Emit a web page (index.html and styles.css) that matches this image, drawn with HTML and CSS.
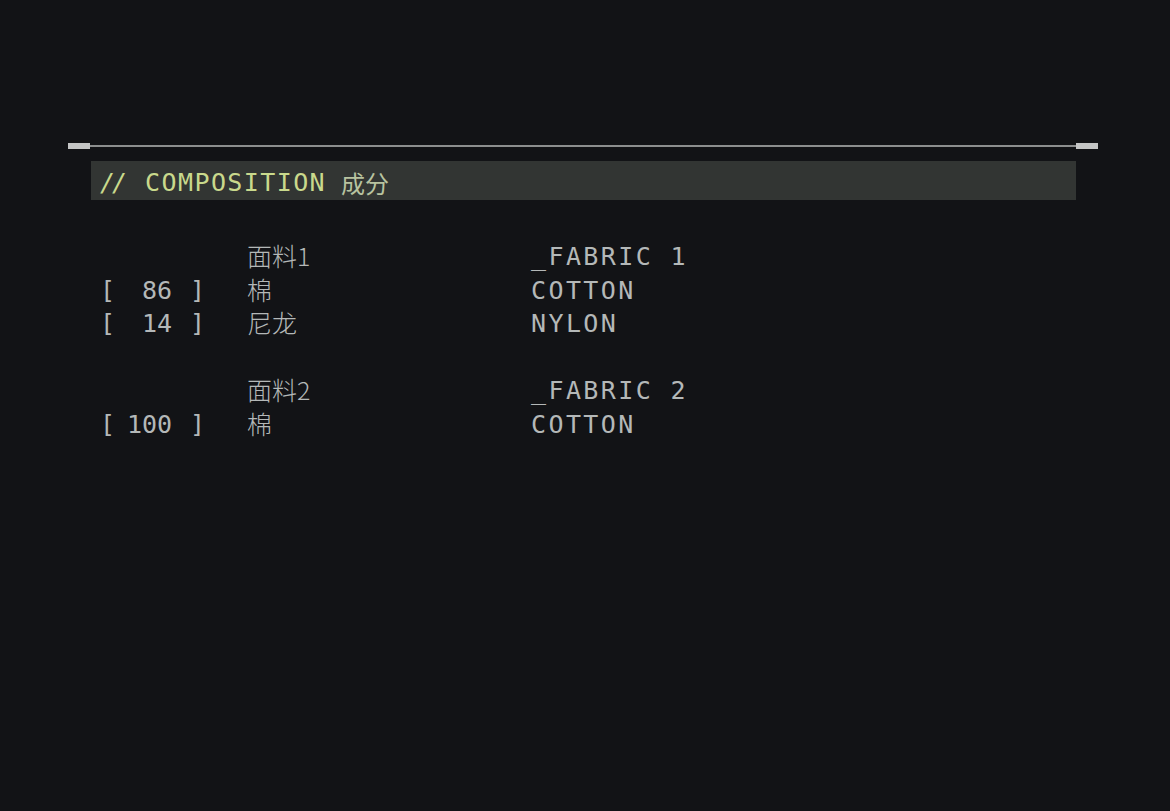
FILE: index.html
```html
<!DOCTYPE html>
<html lang="zh">
<head>
<meta charset="utf-8">
<title>Composition</title>
<link rel="stylesheet" href="styles.css">
</head>
<body>
<div class="panel">
  <div class="rule"><span class="cap"></span><span class="line"></span><span class="cap"></span></div>
  <div class="header"><span class="slashes">//</span><span class="title">COMPOSITION</span><span class="title-cn">成分</span></div>
  <div class="table">
    <div class="pct"></div><div class="cn">面料1</div><div class="en">_FABRIC 1</div>
    <div class="pct"><span>[</span><span class="num">86</span><span class="close">]</span></div><div class="cn">棉</div><div class="en">COTTON</div>
    <div class="pct"><span>[</span><span class="num">14</span><span class="close">]</span></div><div class="cn">尼龙</div><div class="en">NYLON</div>
    <div class="pct"></div><div class="cn"></div><div class="en"></div>
    <div class="pct"></div><div class="cn">面料2</div><div class="en">_FABRIC 2</div>
    <div class="pct"><span>[</span><span class="num">100</span><span class="close">]</span></div><div class="cn">棉</div><div class="en">COTTON</div>
  </div>
</div>
</body>
</html>
```
FILE: styles.css
```css
html, body {
  margin: 0;
  padding: 0;
  background: #121316;
  height: 100%;
}
body {
  font-family: "DejaVu Sans Mono", "Noto Sans CJK SC", monospace;
  color: #b4b8b8;
}
.panel {
  padding: 143px 0 0 68px;
  width: 1030px;
}
.rule {
  display: flex;
  align-items: center;
  height: 6px;
}
.rule .cap {
  width: 22px;
  height: 6px;
  background: #c4c5c5;
}
.rule .line {
  flex: 1;
  height: 2px;
  background: #8c8e8e;
}
.header {
  margin: 12px 0 0 23px;
  padding-top: 4px;
  box-sizing: border-box;
  width: 985px;
  height: 39px;
  background: #323533;
  display: flex;
  align-items: center;
  color: #c9d98c;
  font-size: 25px;
}
.slashes {
  margin-left: 9px;
  letter-spacing: -3px;
  font-style: italic;
}
.title {
  margin-left: 21px;
  letter-spacing: 1.4px;
}
.title-cn {
  margin-left: 15px;
  font-family: "Noto Sans CJK SC", sans-serif;
  font-size: 24px;
  color: #b8c3a0;
}
.table {
  margin: 40px 0 0 32px;
  display: grid;
  grid-template-columns: 147px 284px auto;
  grid-auto-rows: 33.5px;
  align-items: center;
  font-size: 25px;
}
.pct {
  display: flex;
  align-items: center;
}
.pct .num {
  width: 57px;
  text-align: right;
}
.pct .close {
  margin-left: 18px;
}
.cn {
  font-family: "Noto Sans CJK SC", sans-serif;
  font-size: 25px;
  font-weight: 300;
  margin-top: -3px;
}
.en {
  letter-spacing: 2.4px;
}
```
